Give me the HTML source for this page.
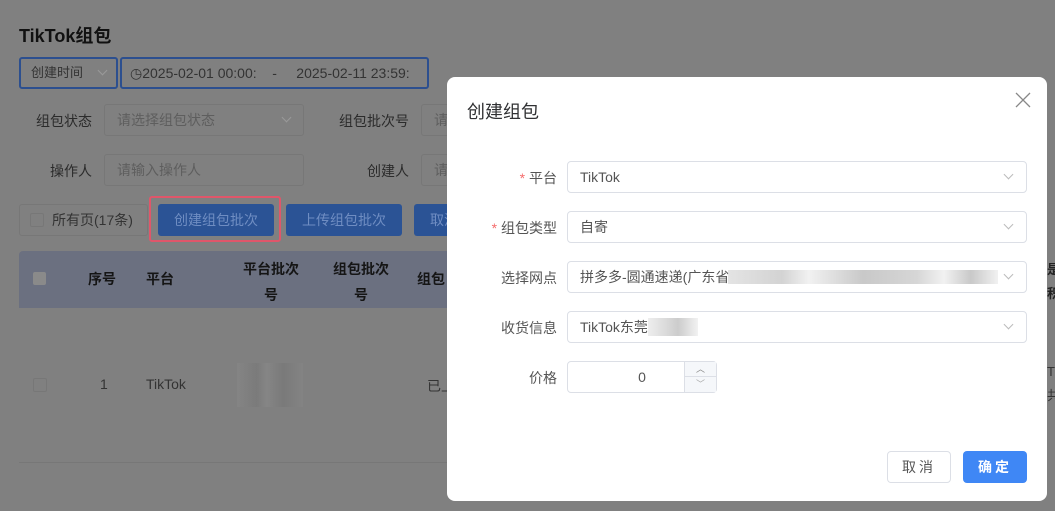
<!DOCTYPE html>
<html><head><meta charset="utf-8"><style>
*{box-sizing:border-box;margin:0;padding:0}
body{width:1055px;height:511px;overflow:hidden;background:#808080;font-family:"Liberation Sans","Noto Sans CJK SC",sans-serif;font-size:14px;position:relative}
.a{position:absolute}
.inp{position:absolute;border:1px solid #777;border-radius:3px;background:#808080;color:#5a5a5a;font-size:13px;padding-left:12px;line-height:30px;height:32px}
.lbl{position:absolute;color:#2b2b2b;font-size:14px;text-align:right}
.chev{position:absolute;width:7px;height:7px;border-right:1px solid #999;border-bottom:1px solid #999;transform:rotate(45deg)}
.btn{position:absolute;background:#2b5395;color:#6f8dc2;border-radius:3px;height:32px;line-height:32px;text-align:center;font-size:14px}
.th{position:absolute;color:#151515;font-weight:bold;font-size:14px;text-align:center;line-height:26px}
.dlg{position:absolute;left:447px;top:77px;width:600px;height:424px;background:#fff;border-radius:8px}
.dl{position:absolute;width:100px;left:10px;text-align:right;color:#555;font-size:14px}
.sel{position:absolute;left:120px;width:460px;height:32px;border:1px solid #dcdfe6;border-radius:4px;color:#555;padding-left:12px;line-height:30px;font-size:14px}
.sel .chev{right:14px;top:9px;border-color:#bbb}
.star{color:#f56c6c}
</style></head><body>
<div class="a" style="left:19px;top:22px;font-size:18px;font-weight:bold;color:#111">TikTok组包</div>
<div class="inp" style="left:19px;top:57px;width:99px;border:2px solid #2c4f8f;color:#333;padding-left:10px;line-height:28px">创建时间<span class="chev" style="left:78px;top:8px"></span></div>
<div class="inp" style="left:120px;top:57px;width:309px;border:2px solid #2c4f8f;color:#333;padding-left:8px;line-height:28px;font-size:14px">◷2025-02-01 00:00: &nbsp; &nbsp;- &nbsp; &nbsp; 2025-02-11 23:59:</div>
<div class="lbl" style="left:20px;top:111px;width:72px">组包状态</div>
<div class="inp" style="left:104px;top:104px;width:200px;color:#5e5e5e;font-size:14px">请选择组包状态<span class="chev" style="left:178px;top:9px"></span></div>
<div class="lbl" style="left:320px;top:111px;width:89px">组包批次号</div>
<div class="inp" style="left:421px;top:104px;width:40px;color:#5e5e5e;font-size:14px">请</div>
<div class="lbl" style="left:20px;top:161px;width:72px">操作人</div>
<div class="inp" style="left:104px;top:154px;width:200px;color:#5e5e5e;font-size:14px">请输入操作人</div>
<div class="lbl" style="left:320px;top:161px;width:89px">创建人</div>
<div class="inp" style="left:421px;top:154px;width:40px;color:#5e5e5e;font-size:14px">请</div>
<div class="inp" style="left:19px;top:204px;width:129px;color:#333;padding-left:32px;font-size:14px">所有页(17条)<span class="a" style="left:10px;top:8px;width:14px;height:14px;border:1px solid #777;border-radius:2px"></span></div>
<div class="a" style="left:149px;top:196px;width:132px;height:46px;border:2px solid #e0566a;border-radius:3px"></div>
<div class="btn" style="left:158px;top:204px;width:116px">创建组包批次</div>
<div class="btn" style="left:286px;top:204px;width:116px">上传组包批次</div>
<div class="btn" style="left:414px;top:204px;width:60px;text-align:left;padding-left:16px">取消</div>
<div class="a" style="left:19px;top:251px;width:440px;height:57px;background:#6b7080;border-radius:4px 0 0 0"></div>
<div class="a" style="left:33px;top:272px;width:13px;height:13px;background:#8a8a8a;border-radius:2px"></div>
<div class="th" style="left:88px;top:266px">序号</div>
<div class="th" style="left:146px;top:266px">平台</div>
<div class="th" style="left:238px;top:256px;width:66px">平台批次<br>号</div>
<div class="th" style="left:328px;top:256px;width:66px">组包批次<br>号</div>
<div class="th" style="left:417px;top:266px">组包</div>
<div class="a" style="left:33px;top:378px;width:14px;height:14px;border:1px solid #777;border-radius:2px"></div>
<div class="a" style="left:100px;top:376px;color:#333">1</div>
<div class="a" style="left:146px;top:376px;color:#333">TikTok</div>
<div class="a" style="left:237px;top:363px;width:66px;height:44px;background:linear-gradient(90deg,#858585,#7a7a7a 30%,#868686 45%,#797979 70%,#848484);opacity:.9"></div>
<div class="a" style="left:427px;top:376px;color:#333">已上</div>
<div class="a" style="left:19px;top:462px;width:440px;height:1px;background:#777"></div>
<div class="a" style="left:1047px;top:258px;color:#222;font-weight:bold;font-size:13px;line-height:24px">是<br>积</div>
<div class="a" style="left:1047px;top:360px;color:#333;font-size:13px;line-height:24px">T<br>共</div>

<div class="dlg">
<div class="a" style="left:20px;top:21px;font-size:18px;color:#303133">创建组包</div>
<svg class="a" style="left:568px;top:15px" width="16" height="16" viewBox="0 0 16 16"><path d="M1 1L15 15M15 1L1 15" stroke="#888" stroke-width="1.3"/></svg>
<div class="dl" style="top:91px"><span class="star">*</span> 平台</div>
<div class="sel" style="top:84px">TikTok<span class="chev"></span></div>
<div class="dl" style="top:141px"><span class="star">*</span> 组包类型</div>
<div class="sel" style="top:134px">自寄<span class="chev"></span></div>
<div class="dl" style="top:191px">选择网点</div>
<div class="sel" style="top:184px">拼多多-圆通速递(广东省<span class="a" style="left:160px;top:8px;width:270px;height:14px;background:linear-gradient(90deg,#ddd,#c8c8c8 20%,#eee 30%,#bbb 50%,#ccc 70%,#eee 80%,#bbb 90%,#eee);opacity:.8"></span><span class="chev"></span></div>
<div class="dl" style="top:241px">收货信息</div>
<div class="sel" style="top:234px">TikTok东莞<span class="a" style="left:80px;top:6px;width:50px;height:18px;background:linear-gradient(90deg,#eee,#d8d8d8 40%,#ccc 60%,#f2f2f2)"></span><span class="chev"></span></div>
<div class="dl" style="top:291px">价格</div>
<div class="sel" style="top:284px;width:150px;padding:0;text-align:center"><span style="display:inline-block;width:116px;color:#555">0</span>
<div class="a" style="left:116px;top:0;width:32px;height:30px;border-left:1px solid #dcdfe6;background:#f5f7fa"><div style="height:15px;border-bottom:1px solid #dcdfe6;font-size:9px;line-height:14px;color:#888">︿</div><div style="font-size:9px;line-height:14px;color:#aaa">﹀</div></div></div>
<div class="a" style="left:440px;top:374px;width:64px;height:32px;border:1px solid #dcdfe6;border-radius:4px;text-align:center;line-height:30px;color:#555;letter-spacing:3px">取消</div>
<div class="a" style="left:516px;top:374px;width:64px;height:32px;background:#3f87f5;border-radius:4px;text-align:center;line-height:32px;color:#fff;font-weight:bold;letter-spacing:3px">确定</div>
</div>
</body></html>
